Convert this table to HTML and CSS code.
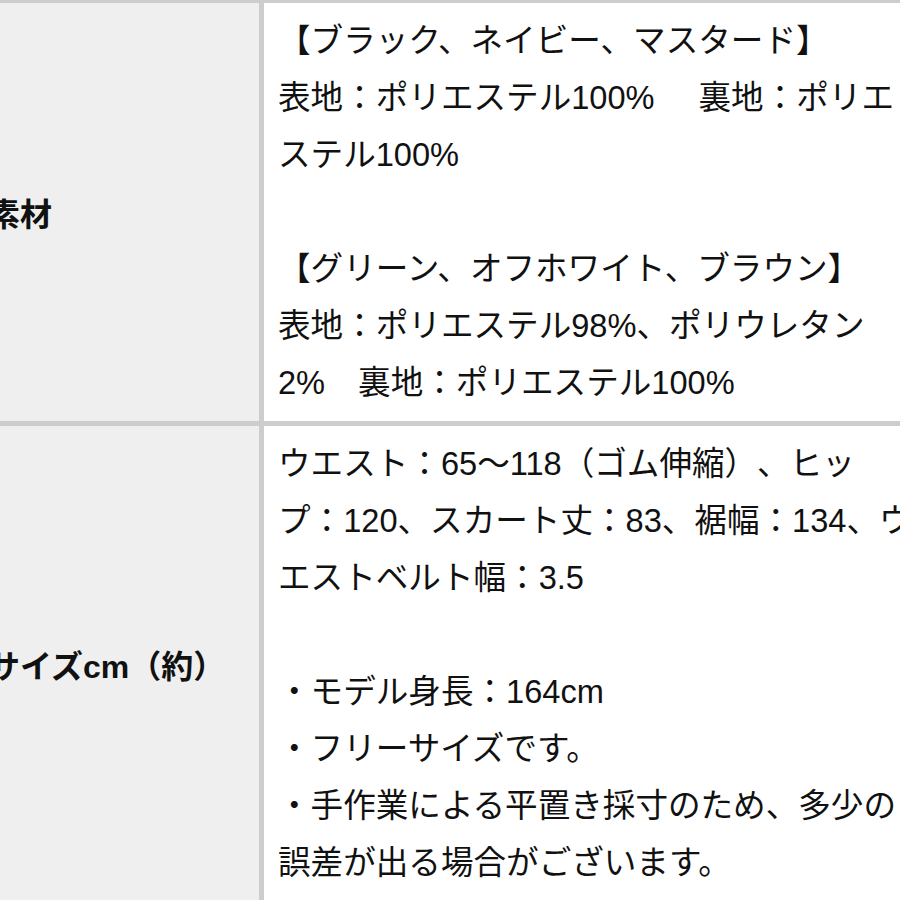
FILE: index.html
```html
<!DOCTYPE html>
<html lang="ja">
<head>
<meta charset="utf-8">
<link rel="stylesheet" href="styles.css">
</head>
<body>
<div class="spec">
  <div class="label">素材</div>
  <div class="value">
    <div class="line">【ブラック、ネイビー、マスタード】</div>
    <div class="line">表地：ポリエステル100%<span class="gap-wide"></span>裏地：ポリエ</div>
    <div class="line">ステル100%</div>
    <div class="line"></div>
    <div class="line">【グリーン、オフホワイト、ブラウン】</div>
    <div class="line">表地：ポリエステル98%、ポリウレタン</div>
    <div class="line">2%<span class="gap"></span>裏地：ポリエステル100%</div>
  </div>
  <div class="label">サイズcm（約）</div>
  <div class="value">
    <div class="line">ウエスト：65〜118（ゴム伸縮）、ヒッ</div>
    <div class="line">プ：120、スカート丈：83、裾幅：134、ウ</div>
    <div class="line">エストベルト幅：3.5</div>
    <div class="line"></div>
    <div class="line">・モデル身長：164cm</div>
    <div class="line">・フリーサイズです。</div>
    <div class="line">・手作業による平置き採寸のため、多少の</div>
    <div class="line">誤差が出る場合がございます。</div>
  </div>
</div>
</body>
</html>
```

FILE: styles.css
```css
html, body {
  margin: 0;
  padding: 0;
  overflow: hidden;
  background: #ffffff;
}

.spec {
  margin-left: -20px;
  width: 960px;
  display: grid;
  grid-template-columns: 279px 1fr;
  gap: 5px;
  padding-top: 3px;
  background: #cdcdcd;
  font-family: "Liberation Sans", "Noto Sans CJK JP", sans-serif;
  font-size: 32.6px;
  color: #111111;
  text-spacing-trim: space-all;
}

.label {
  background: #efefef;
  display: flex;
  align-items: center;
  padding-left: 8px;
  font-size: 32px;
  font-weight: bold;
  white-space: nowrap;
}

.value {
  background: #ffffff;
  padding: 9px 14px 10px 14px;
}

.line {
  height: 57px;
  line-height: 57px;
  white-space: nowrap;
}

.gap-wide {
  display: inline-block;
  width: 44px;
}

.gap {
  display: inline-block;
  width: 33px;
}
```
